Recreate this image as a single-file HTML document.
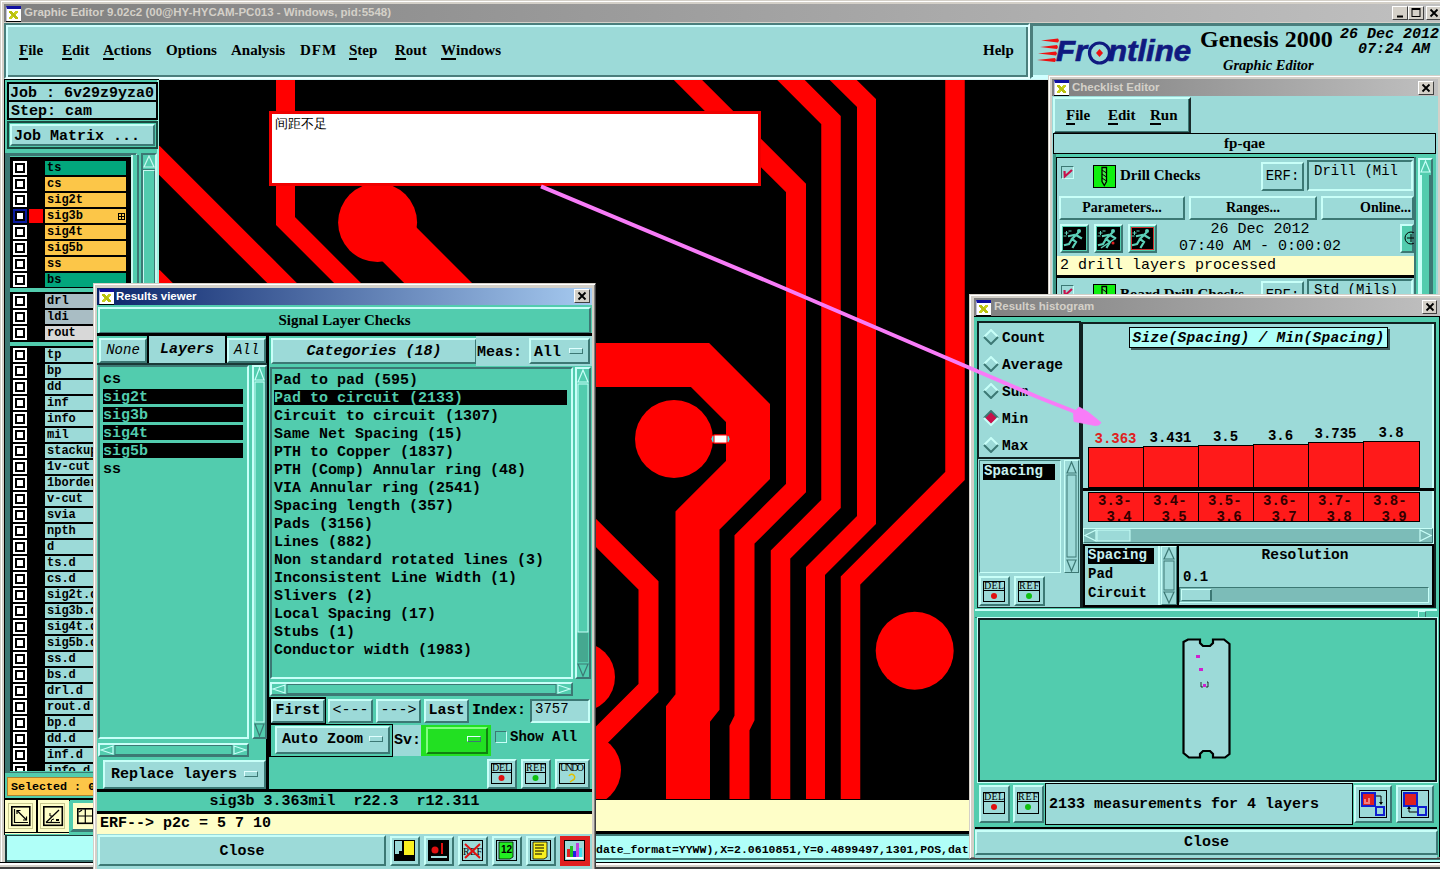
<!DOCTYPE html>
<html><head><meta charset="utf-8">
<style>
*{margin:0;padding:0;box-sizing:border-box}
html,body{width:1440px;height:869px;overflow:hidden;background:#d4d0c8;position:relative}
.a{position:absolute}
u{text-decoration:none;border-bottom:2px solid #000;padding-bottom:0;display:inline-block;line-height:15px}
.mono{font-family:"Liberation Mono",monospace;font-weight:bold}
.serif{font-family:"Liberation Serif",serif;font-weight:bold}
.sans{font-family:"Liberation Sans",sans-serif;font-weight:bold}
.tb{background:linear-gradient(to right,#808080,#c0c0c0);color:#d4d0c8;font-family:"Liberation Sans",sans-serif;font-weight:bold;font-size:11.5px;line-height:17px;white-space:nowrap;overflow:hidden}
.tba{background:linear-gradient(to right,#0a246a,#a6caf0);color:#fff}
.ico{position:absolute;width:15px;height:15px;background:#fff;border-top:3px solid #1010a0;border-left:1px solid #c0c0e0;box-shadow:0 1px 0 #000}.ico::after{content:"";position:absolute;left:2px;top:2px;width:9px;height:8px;background:linear-gradient(45deg,transparent 40%,#b8c010 40%,#b8c010 60%,transparent 60%),linear-gradient(-45deg,transparent 40%,#c8d020 40%,#c8d020 60%,transparent 60%)}
.xbtn{position:absolute;width:16px;height:14px;background:#d4d0c8;border:1px solid;border-color:#fff #404040 #404040 #fff;font-family:"Liberation Sans",sans-serif;font-size:12px;line-height:11px;text-align:center;color:#000}
.out{border:2px solid;border-color:#c8f8f0 #3c7874 #3c7874 #c8f8f0}
.in{border:2px solid;border-color:#3c7874 #c8f8f0 #c8f8f0 #3c7874}
.win{position:absolute;background:#d4d0c8;border:1px solid;border-color:#d4d0c8 #404040 #404040 #d4d0c8;box-shadow:inset 1px 1px 0 #fff,inset -1px -1px 0 #808080}
</style></head><body>
<!-- outer frame lines -->
<div class="a" style="left:1px;top:1px;width:1439px;height:868px;border-left:1px solid #fff;border-top:1px solid #fff"></div>
<!-- main title -->
<div class="a tb" style="left:4px;top:4px;width:1436px;height:18px;padding-left:20px">Graphic Editor 9.02c2 (00@HY-HYCAM-PC013 - Windows, pid:5548)</div>
<div class="ico" style="left:6px;top:6px"></div>
<div class="xbtn" style="left:1392px;top:6px"><svg width="14" height="12" style="position:absolute;left:0;top:0"><rect x="4" y="8.5" width="6" height="2" fill="#000"/></svg></div>
<div class="xbtn" style="left:1408px;top:6px"><svg width="14" height="12" style="position:absolute;left:0;top:0"><rect x="3" y="1.5" width="8" height="8" fill="none" stroke="#000" stroke-width="1"/><rect x="3" y="1.5" width="8" height="1.5" fill="#000"/></svg></div>
<div class="xbtn" style="left:1426px;top:6px"><svg width="14" height="12" style="position:absolute;left:0;top:0"><path d="M3.5,2.5 L10.5,9.5 M10.5,2.5 L3.5,9.5" stroke="#000" stroke-width="1.8"/></svg></div>

<!-- MENUBAR -->
<div class="a" style="left:4px;top:22px;width:1436px;height:1px;background:#d4d0c8"></div>
<div class="a" style="left:4px;top:23px;width:1436px;height:57px;background:#d0f4f4"></div>
<div class="a" style="left:4px;top:23px;width:1026px;height:56px;background:#9cdad8;border:2px solid;border-color:#4a7e7c #e8ffff #e8ffff #4a7e7c;box-shadow:inset 2px 2px 0 #d0ffff,inset -2px -2px 0 #4a7e7c"></div>
<div class="a serif" style="left:0;top:41px;font-size:15px;line-height:18px;color:#000;white-space:nowrap">
<span class="a" style="left:19px"><u>F</u>ile</span>
<span class="a" style="left:62px"><u>E</u>dit</span>
<span class="a" style="left:103px"><u>A</u>ctions</span>
<span class="a" style="left:166px">Options</span>
<span class="a" style="left:231px">Analysis</span>
<span class="a" style="left:300px;letter-spacing:1px">DFM</span>
<span class="a" style="left:349px"><u>S</u>tep</span>
<span class="a" style="left:395px"><u>R</u>out</span>
<span class="a" style="left:441px"><u>W</u>indows</span>
<span class="a" style="left:983px">Help</span>
</div>
<!-- Help separator -->
<div class="a" style="left:960px;top:25px;width:2px;height:50px;background:transparent"></div>
<!-- FRONTLINE PANEL -->
<div class="a" style="left:1030px;top:23px;width:420px;height:56px;background:#9cdad8;border:2px solid;border-color:#4a7e7c #d0ffff #d0ffff #4a7e7c;box-shadow:inset 1px 1px 0 #4a7e7c,inset -2px -2px 0 #d0ffff"></div>
<svg class="a" style="left:1030px;top:23px" width="410" height="55">
<g fill="#ee1111">
<polygon points="11,17.5 28,15.5 29,17.5 28,19.5"/>
<polygon points="10,24 27,22 28,24 27,26"/>
<polygon points="8,30.5 26,28.5 27,30.5 26,32.5"/>
<polygon points="7,37 25,35 26,37 25,39"/>
</g>
</svg>
<div class="a" style="left:1056px;top:34px;font-family:'Liberation Sans',sans-serif;font-weight:bold;font-style:italic;font-size:30px;line-height:34px;color:#101a80;letter-spacing:0px;-webkit-text-stroke:0.7px #101a80;white-space:nowrap;transform:scaleX(1.04);transform-origin:0 0">Fr<span style="display:inline-block;width:20px"></span>ntline</div>
<svg class="a" style="left:1087px;top:39px" width="26" height="28"><circle cx="12.5" cy="14" r="10" fill="none" stroke="#101a80" stroke-width="3.2"/><polygon points="12.5,10 16,14 12.5,18 9,14" fill="#ee1111"/></svg>
<div class="a serif" style="left:1200px;top:25px;font-size:24px;line-height:28px;color:#000;white-space:nowrap">Genesis 2000</div>
<div class="a serif" style="left:1223px;top:57px;font-size:14.5px;line-height:17px;font-style:italic;color:#000;white-space:nowrap">Graphic Editor</div>
<div class="a mono" style="left:1340px;top:27px;font-size:15px;line-height:15px;font-style:italic;color:#000;white-space:pre">26 Dec 2012
  07:24 AM</div>
<!-- LEFT PANEL -->
<style>
.cb{position:absolute;left:13px;width:14px;height:14px;background:#fff;border:2px solid #fff;box-shadow:inset 0 0 0 2px #000}
.lbl{position:absolute;left:45px;width:81px;height:14px;font-family:"Liberation Mono",monospace;font-weight:bold;font-size:12px;line-height:15px;padding-left:2px;color:#000;white-space:nowrap;overflow:hidden}
</style>
<div class="a" style="left:4px;top:79px;width:155px;height:756px;background:#52ccae;border-left:1px solid #000;border-top:1px solid #000;box-shadow:inset -2px 0 0 #a0f0e0"></div>
<div class="a mono" style="left:7px;top:82px;width:151px;height:20px;background:#9cdad8;border:2px solid #000;font-size:15px;line-height:19px;padding-left:1px;white-space:pre">Job : 6v29z9yza0</div>
<div class="a mono" style="left:7px;top:100px;width:151px;height:20px;background:#9cdad8;border:2px solid #000;font-size:15px;line-height:19px;padding-left:2px;white-space:pre">Step: cam</div>
<div class="a" style="left:7px;top:121px;width:151px;height:28px;background:#52ccae;border:2px solid #1a4a40"></div>
<div class="a mono" style="left:10px;top:124px;width:145px;height:22px;background:#9cdad8;border:2px solid;border-color:#c8fff8 #3c7874 #3c7874 #c8fff8;font-size:15px;line-height:21px;padding-left:2px;white-space:pre">Job Matrix ...</div>
<!-- layer list frame -->
<div class="a" style="left:5px;top:153px;width:132px;height:619px;border-top:3px solid #3c7874;border-left:5px solid #3c7874;border-right:2px solid #c8f8f0"></div>
<div class="a" style="left:10px;top:157px;width:121px;height:614px;background:#000;overflow:hidden">
<div class="a" style="left:-10px;top:-157px;width:200px;height:800px">
<div class="cb" style="top:161px;border-color:#fff"></div><div class="lbl" style="top:161px;background:#02a67c">ts</div>
<div class="cb" style="top:177px;border-color:#fff"></div><div class="lbl" style="top:177px;background:#fcc648">cs</div>
<div class="cb" style="top:193px;border-color:#fff"></div><div class="lbl" style="top:193px;background:#fcc648">sig2t</div>
<div class="cb" style="top:209px;border-color:#0a1aa0"></div><div class="a" style="left:29px;top:209px;width:14px;height:14px;background:#ff0000"></div><div class="lbl" style="top:209px;background:#fcc648">sig3b</div>
<div class="cb" style="top:225px;border-color:#fff"></div><div class="lbl" style="top:225px;background:#fcc648">sig4t</div>
<div class="cb" style="top:241px;border-color:#fff"></div><div class="lbl" style="top:241px;background:#fcc648">sig5b</div>
<div class="cb" style="top:257px;border-color:#fff"></div><div class="lbl" style="top:257px;background:#fcc648">ss</div>
<div class="cb" style="top:273px;border-color:#fff"></div><div class="lbl" style="top:273px;background:#02a67c">bs</div>
<div class="cb" style="top:294px;border-color:#fff"></div><div class="lbl" style="top:294px;background:#a9bdc4">drl</div>
<div class="cb" style="top:310px;border-color:#fff"></div><div class="lbl" style="top:310px;background:#a9bdc4">ldi</div>
<div class="cb" style="top:326px;border-color:#fff"></div><div class="lbl" style="top:326px;background:#d8d8d8">rout</div>
<div class="cb" style="top:348px;border-color:#fff"></div><div class="lbl" style="top:348px;background:#9cdad8">tp</div>
<div class="cb" style="top:364px;border-color:#fff"></div><div class="lbl" style="top:364px;background:#9cdad8">bp</div>
<div class="cb" style="top:380px;border-color:#fff"></div><div class="lbl" style="top:380px;background:#9cdad8">dd</div>
<div class="cb" style="top:396px;border-color:#fff"></div><div class="lbl" style="top:396px;background:#9cdad8">inf</div>
<div class="cb" style="top:412px;border-color:#fff"></div><div class="lbl" style="top:412px;background:#9cdad8">info</div>
<div class="cb" style="top:428px;border-color:#fff"></div><div class="lbl" style="top:428px;background:#9cdad8">mil</div>
<div class="cb" style="top:444px;border-color:#fff"></div><div class="lbl" style="top:444px;background:#9cdad8">stackup</div>
<div class="cb" style="top:460px;border-color:#fff"></div><div class="lbl" style="top:460px;background:#9cdad8">1v-cut</div>
<div class="cb" style="top:476px;border-color:#fff"></div><div class="lbl" style="top:476px;background:#9cdad8">1border</div>
<div class="cb" style="top:492px;border-color:#fff"></div><div class="lbl" style="top:492px;background:#9cdad8">v-cut</div>
<div class="cb" style="top:508px;border-color:#fff"></div><div class="lbl" style="top:508px;background:#9cdad8">svia</div>
<div class="cb" style="top:524px;border-color:#fff"></div><div class="lbl" style="top:524px;background:#9cdad8">npth</div>
<div class="cb" style="top:540px;border-color:#fff"></div><div class="lbl" style="top:540px;background:#9cdad8">d</div>
<div class="cb" style="top:556px;border-color:#fff"></div><div class="lbl" style="top:556px;background:#9cdad8">ts.d</div>
<div class="cb" style="top:572px;border-color:#fff"></div><div class="lbl" style="top:572px;background:#9cdad8">cs.d</div>
<div class="cb" style="top:588px;border-color:#fff"></div><div class="lbl" style="top:588px;background:#9cdad8">sig2t.d</div>
<div class="cb" style="top:604px;border-color:#fff"></div><div class="lbl" style="top:604px;background:#9cdad8">sig3b.d</div>
<div class="cb" style="top:620px;border-color:#fff"></div><div class="lbl" style="top:620px;background:#9cdad8">sig4t.d</div>
<div class="cb" style="top:636px;border-color:#fff"></div><div class="lbl" style="top:636px;background:#9cdad8">sig5b.d</div>
<div class="cb" style="top:652px;border-color:#fff"></div><div class="lbl" style="top:652px;background:#9cdad8">ss.d</div>
<div class="cb" style="top:668px;border-color:#fff"></div><div class="lbl" style="top:668px;background:#9cdad8">bs.d</div>
<div class="cb" style="top:684px;border-color:#fff"></div><div class="lbl" style="top:684px;background:#9cdad8">drl.d</div>
<div class="cb" style="top:700px;border-color:#fff"></div><div class="lbl" style="top:700px;background:#9cdad8">rout.d</div>
<div class="cb" style="top:716px;border-color:#fff"></div><div class="lbl" style="top:716px;background:#9cdad8">bp.d</div>
<div class="cb" style="top:732px;border-color:#fff"></div><div class="lbl" style="top:732px;background:#9cdad8">dd.d</div>
<div class="cb" style="top:748px;border-color:#fff"></div><div class="lbl" style="top:748px;background:#9cdad8">inf.d</div>
<div class="cb" style="top:764px;border-color:#fff"></div><div class="lbl" style="top:764px;background:#9cdad8">info.d</div>
<div class="a" style="left:10px;top:288px;width:121px;height:4px;background:#52ccae"></div>
<div class="a" style="left:10px;top:342px;width:121px;height:4px;background:#52ccae"></div>
</div></div>
<svg class="a" style="left:118px;top:213px" width="7" height="7"><rect x="0.5" y="0.5" width="6" height="6" fill="none" stroke="#000"/><line x1="3.5" y1="0" x2="3.5" y2="7" stroke="#000"/><line x1="0" y1="3.5" x2="7" y2="3.5" stroke="#000"/></svg>
<!-- scrollbar -->
<div class="a" style="left:131px;top:155px;width:8px;height:616px;background:#52ccae;border-left:2px solid #c8f8f0;border-right:2px solid #3c7874"></div>
<div class="a" style="left:141px;top:153px;width:16px;height:619px;background:#3c7874;border:2px solid;border-color:#3c7874 #c8f8f0 #c8f8f0 #3c7874"></div>
<div class="a" style="left:143px;top:155px;width:12px;height:14px;background:#52ccae"></div>
<svg class="a" style="left:143px;top:155px" width="12" height="14"><polygon points="6,1 11,12 1,12" fill="#52ccae" stroke="#c8f8f0" stroke-width="1.2"/></svg>
<div class="a" style="left:143px;top:170px;width:12px;height:600px;background:#52ccae;border:1px solid;border-color:#c8f8f0 #3c7874 #3c7874 #c8f8f0"></div>
<!-- selected -->
<div class="a" style="left:5px;top:772px;width:154px;height:28px;background:#52ccae;border-top:1px solid #3c7874"></div>
<div class="a mono" style="left:7px;top:777px;width:100px;height:19px;background:#fcc648;border:1px solid #b08030;font-size:11.7px;line-height:18px;padding-left:3px;white-space:pre">Selected : 0</div>
<div class="a" style="left:5px;top:798px;width:154px;height:3px;background:#000"></div>
<div class="a" style="left:5px;top:801px;width:154px;height:33px;background:#52ccae"></div>
<div class="a" style="left:5px;top:800px;width:64px;height:33px;background:#fefec8;border-bottom:1px solid #000;box-shadow:0 1px 0 #fefec8"></div>
<div class="a" style="left:36px;top:800px;width:2px;height:32px;background:#000"></div>
<div class="a" style="left:70px;top:800px;width:26px;height:32px;background:#fefec8;border:3px solid;border-color:#52ccae #3c7874 #3c7874 #52ccae"></div>
<svg class="a" style="left:5px;top:800px" width="91" height="33">
<g fill="none" stroke="#c8c890" stroke-width="1"><rect x="3.5" y="3.5" width="24" height="25"/><rect x="35.5" y="3.5" width="24" height="25"/></g>
<g fill="none" stroke="#000" stroke-width="1.6">
<rect x="6.8" y="6.8" width="18" height="18.5"/>
<polyline points="9.5,9 9.5,22.5 23,22.5" stroke-width="1.2"/>
<line x1="12" y1="10.5" x2="21.5" y2="20" stroke-width="1.2"/>
<polyline points="12,14 12,10.5 15.5,10.5" stroke-width="1.2"/><polyline points="18,20 21.5,20 21.5,16.5" stroke-width="1.2"/>
<rect x="38.8" y="6.8" width="18.5" height="18.5"/>
<line x1="41" y1="22.5" x2="54" y2="10" stroke-width="1.3"/><line x1="41" y1="22.5" x2="55" y2="22.5" stroke-width="1.2"/>
<path d="M45,13 v3 h2" stroke-width="1"/><path d="M46,22 a3,3 0 0 1 3,-3" stroke-width="1"/><path d="M51,19.5 h3 M51,20.5 h3" stroke-width="1"/>
<rect x="72.8" y="8.8" width="15" height="14.5"/>
<path d="M74,12 l3,-2 M80.3,9 v14 M73,16 h15" stroke-width="1.2"/>
</g>
</svg>
<div class="a" style="left:5px;top:835px;width:154px;height:27px;background:#b0fff8;border-left:2px solid #1a3a3a;border-top:1px solid #1a3a3a;box-shadow:inset 0 -2px 0 #3c7874"></div>
<!-- CANVAS -->
<svg class="a" style="left:0;top:0" width="1440" height="869" viewBox="0 0 1440 869">
<defs><clipPath id="cc"><rect x="159" y="80" width="899" height="719"/></clipPath></defs>
<g clip-path="url(#cc)" fill="none" stroke="#ff0000" stroke-linejoin="miter" stroke-miterlimit="10">
<rect x="159" y="80" width="899" height="719" fill="#000" stroke="none"/>
<polyline stroke-width="19" points="285.5,60 285.5,221 570,505.5"/>
<polyline stroke-width="21" points="140,141 570,571"/>
<polyline stroke-width="21" points="130,255 570,695"/>
<polyline stroke-width="48" points="377.6,222.5 572,417"/>
<circle cx="377.6" cy="222.5" r="39.5" fill="#ff0000" stroke="none"/>
<polyline stroke-width="20" points="667,59 796,188 796,488 744.5,539.5 744.5,718 739.5,728 739.5,810"/>
<polyline stroke-width="19.5" points="772,61 831,120 831,504 780.5,554.5 780.5,810"/>
<polyline stroke-width="19" points="823,60 866.5,103 866.5,520 815.5,571 815.5,810"/>
<polyline stroke-width="19.5" points="955,60 955,476 850.5,580.5 850.5,810"/>
<polyline stroke-width="44" points="560,365 700,365 748,413 748,470 697.5,520.5 697.5,702 688,714 688,810"/>
<polyline stroke-width="20" points="550,487 648.5,585.5 648.5,688 560,776.5"/>
<circle cx="674" cy="439" r="39" fill="#ff0000" stroke="none"/>
<circle cx="914.7" cy="650.7" r="39" fill="#ff0000" stroke="none"/>
<circle cx="580" cy="677" r="35" fill="#ff0000" stroke="none"/>
<circle cx="585" cy="770" r="36" fill="#ff0000" stroke="none"/>
<rect x="711" y="435" width="19" height="8" rx="3.5" fill="#40e8f0"/><rect x="714" y="435" width="13" height="8" fill="#fff"/>
</g>
<rect x="270.5" y="112.5" width="489" height="72" fill="#fff" stroke="#f00000" stroke-width="3"/>
</svg>
<div class="a" style="left:275px;top:116px;font-family:'Liberation Sans',sans-serif;font-size:13px;line-height:16px;color:#000">间距不足</div>


<!-- BOTTOM BARS -->
<div class="a" style="left:158px;top:799px;width:900px;height:33px;background:#fefec8;border-top:1px solid #000"></div>
<div class="a" style="left:158px;top:831px;width:900px;height:3px;background:#000"></div>
<div class="a" style="left:158px;top:834px;width:900px;height:28px;background:#b0fff8;border-top:2px solid #3c7874;border-bottom:2px solid #b0fff8;box-shadow:inset 0 -2px 0 #3c7874"></div>
<div class="a mono" style="left:596px;top:842px;font-size:11.5px;line-height:16px;white-space:pre">date_format=YYWW),X=2.0610851,Y=0.4899497,1301,POS,dat</div>
<div class="a" style="left:0;top:862px;width:1440px;height:7px;background:#d4d0c8;border-top:1px solid #000;box-shadow:inset 0 2px 0 #fff,inset 0 -2px 0 #404040"></div>
<div class="a" style="left:1058px;top:834px;width:382px;height:28px;background:#b0fff8;border-top:2px solid #3c7874;border-bottom:2px solid #b0fff8;box-shadow:inset 0 -2px 0 #3c7874"></div>
<!-- RESULTS VIEWER -->
<style>
.rvt{font-family:"Liberation Mono",monospace;font-weight:bold;font-size:15px;line-height:18px;white-space:pre}
.sb{position:absolute;background:#52ccae;border:2px solid;border-color:#3c7874 #c8fff8 #c8fff8 #3c7874}
.dd{position:absolute;width:14px;height:6px;background:#9cdad8;border:1px solid;border-color:#e0ffff #3c7874 #3c7874 #e0ffff}
.ib{position:absolute;width:30px;height:30px;background:#9cdad8;border:2px solid;border-color:#c8fff8 #3c7874 #3c7874 #c8fff8}
</style>
<div class="win" style="left:93px;top:283px;width:503px;height:592px"></div>
<div class="a tb tba" style="left:97px;top:288px;width:495px;height:17px;padding-left:19px">Results viewer</div>
<div class="ico" style="left:99px;top:289px"></div>
<div class="xbtn" style="left:574px;top:289px;width:16px;height:14px"><svg width="14" height="12" style="position:absolute;left:0;top:0"><path d="M3.5,2.5 L10.5,9.5 M10.5,2.5 L3.5,9.5" stroke="#000" stroke-width="1.8"/></svg></div>
<div class="a" style="left:97px;top:305px;width:495px;height:566px;background:#52ccae"></div>
<div class="btg serif" style="left:98px;top:307px;width:493px;height:27px;font-size:15px;line-height:23px">Signal Layer Checks</div>
<div class="a" style="left:97px;top:333px;width:495px;height:3px;background:#000"></div>
<div class="a" style="left:266px;top:336px;width:3px;height:456px;background:#000"></div>
<div class="a" style="left:97px;top:789px;width:495px;height:3px;background:#000"></div>
<!-- left column -->
<div class="bt rvt" style="left:99px;top:338px;width:48px;height:25px;font-style:italic;font-weight:normal;font-size:14px;line-height:21px">None</div>
<div class="a rvt" style="left:149px;top:336px;width:76px;height:27px;background:#9cdad8;font-style:italic;line-height:28px;text-align:center">Layers</div>
<div class="bt rvt" style="left:227px;top:338px;width:39px;height:25px;font-style:italic;font-weight:normal;font-size:14px;line-height:21px">All</div>
<div class="a" style="left:147px;top:336px;width:2px;height:28px;background:#000"></div>
<div class="a" style="left:225px;top:336px;width:2px;height:28px;background:#000"></div>
<div class="a" style="left:97px;top:363px;width:170px;height:2px;background:#1a3a38"></div>
<div class="sb" style="left:98px;top:365px;width:151px;height:374px"></div>
<div class="rvt"><div class="a" style="left:103px;top:371px;color:#000">cs</div>
<div class="a" style="left:103px;top:389px;width:140px;height:15px;background:#000"></div>
<div class="a" style="left:103px;top:389px;color:#52ccae">sig2t</div>
<div class="a" style="left:103px;top:407px;width:140px;height:15px;background:#000"></div>
<div class="a" style="left:103px;top:407px;color:#52ccae">sig3b</div>
<div class="a" style="left:103px;top:425px;width:140px;height:15px;background:#000"></div>
<div class="a" style="left:103px;top:425px;color:#52ccae">sig4t</div>
<div class="a" style="left:103px;top:443px;width:140px;height:15px;background:#000"></div>
<div class="a" style="left:103px;top:443px;color:#52ccae">sig5b</div>
<div class="a" style="left:103px;top:461px;color:#000">ss</div></div>
<div class="sb" style="left:252px;top:365px;width:15px;height:374px;border-color:#c8fff8 #3c7874 #3c7874 #c8fff8"></div>
<svg class="a" style="left:254px;top:367px" width="11" height="370"><polygon points="5.5,1 10,13 1,13" fill="none" stroke="#c8fff8" stroke-width="1.2"/><polygon points="5.5,369 10,357 1,357" fill="none" stroke="#3c7874" stroke-width="1.2"/><rect x="1" y="15" width="9" height="340" fill="none" stroke="#c8fff8"/></svg>
<div class="sb" style="left:98px;top:743px;width:151px;height:14px;border-color:#c8fff8 #3c7874 #3c7874 #c8fff8"></div>
<svg class="a" style="left:100px;top:745px" width="147" height="10"><polygon points="1,5 13,1 13,9" fill="none" stroke="#c8fff8" stroke-width="1.2"/><polygon points="146,5 134,1 134,9" fill="none" stroke="#c8fff8" stroke-width="1.2"/><rect x="15" y="0.5" width="117" height="9" fill="none" stroke="#3c7874"/></svg>
<div class="bt rvt" style="left:103px;top:760px;width:163px;height:29px;font-weight:bold;font-size:15px;line-height:25px;text-align:left;padding-left:6px">Replace layers</div>
<div class="dd" style="left:244px;top:771px"></div>
<!-- right column -->
<div class="bt rvt" style="left:271px;top:338px;width:206px;height:26px;font-style:italic;line-height:24px">Categories (18)</div>
<div class="a" style="left:476px;top:336px;width:116px;height:30px;background:#9cdad8"></div>
<div class="a rvt" style="left:477px;top:344px">Meas:</div>
<div class="bt rvt" style="left:529px;top:338px;width:61px;height:26px;line-height:25px;text-align:left;padding-left:3px">All</div>
<div class="dd" style="left:569px;top:348px"></div>
<div class="sb" style="left:270px;top:367px;width:303px;height:312px"></div>
<div class="rvt"><div class="a" style="left:274px;top:372px;color:#000">Pad to pad (595)</div>
<div class="a" style="left:274px;top:390px;width:293px;height:15px;background:#000"></div>
<div class="a" style="left:274px;top:390px;color:#52ccae">Pad to circuit (2133)</div>
<div class="a" style="left:274px;top:408px;color:#000">Circuit to circuit (1307)</div>
<div class="a" style="left:274px;top:426px;color:#000">Same Net Spacing (15)</div>
<div class="a" style="left:274px;top:444px;color:#000">PTH to Copper (1837)</div>
<div class="a" style="left:274px;top:462px;color:#000">PTH (Comp) Annular ring (48)</div>
<div class="a" style="left:274px;top:480px;color:#000">VIA Annular ring (2541)</div>
<div class="a" style="left:274px;top:498px;color:#000">Spacing length (357)</div>
<div class="a" style="left:274px;top:516px;color:#000">Pads (3156)</div>
<div class="a" style="left:274px;top:534px;color:#000">Lines (882)</div>
<div class="a" style="left:274px;top:552px;color:#000">Non standard rotated lines (3)</div>
<div class="a" style="left:274px;top:570px;color:#000">Inconsistent Line Width (1)</div>
<div class="a" style="left:274px;top:588px;color:#000">Slivers (2)</div>
<div class="a" style="left:274px;top:606px;color:#000">Local Spacing (17)</div>
<div class="a" style="left:274px;top:624px;color:#000">Stubs (1)</div>
<div class="a" style="left:274px;top:642px;color:#000">Conductor width (1983)</div></div>
<div class="sb" style="left:575px;top:367px;width:16px;height:312px;border-color:#c8fff8 #3c7874 #3c7874 #c8fff8"></div>
<svg class="a" style="left:577px;top:369px" width="12" height="308"><polygon points="6,1 11,13 1,13" fill="none" stroke="#c8fff8" stroke-width="1.2"/><polygon points="6,307 11,295 1,295" fill="none" stroke="#3c7874" stroke-width="1.2"/><rect x="1" y="263" width="10" height="30" fill="#45a890" stroke="none"/><rect x="1" y="15" width="10" height="248" fill="none" stroke="#c8fff8"/></svg>
<div class="sb" style="left:270px;top:682px;width:303px;height:14px;border-color:#c8fff8 #3c7874 #3c7874 #c8fff8"></div>
<svg class="a" style="left:272px;top:684px" width="299" height="10"><polygon points="1,5 13,1 13,9" fill="none" stroke="#c8fff8" stroke-width="1.2"/><polygon points="298,5 286,1 286,9" fill="none" stroke="#c8fff8" stroke-width="1.2"/><rect x="15" y="0.5" width="269" height="9" fill="none" stroke="#3c7874"/></svg>
<div class="a" style="left:269px;top:697px;width:57px;height:27px;background:#000"></div>
<div class="bt rvt" style="left:271px;top:699px;width:54px;height:24px;line-height:20px">First</div>
<div class="bt rvt" style="left:328px;top:699px;width:45px;height:24px;line-height:20px;font-weight:normal">&lt;---</div>
<div class="bt rvt" style="left:376px;top:699px;width:45px;height:24px;line-height:20px;font-weight:normal">---&gt;</div>
<div class="bt rvt" style="left:424px;top:699px;width:45px;height:24px;line-height:20px">Last</div>
<div class="a rvt" style="left:472px;top:702px">Index:</div>
<div class="fld rvt" style="left:530px;top:699px;width:60px;height:24px;line-height:17px;font-weight:normal;font-size:14px;padding-left:3px">3757</div>
<div class="a" style="left:269px;top:724px;width:124px;height:33px;background:#000"></div>
<div class="a" style="left:271px;top:725px;width:121px;height:31px;background:#52ccae"></div>
<div class="bt rvt" style="left:275px;top:726px;width:115px;height:28px;line-height:24px;text-align:left;padding-left:5px">Auto Zoom</div>
<div class="dd" style="left:369px;top:736px"></div>
<div class="a rvt" style="left:393px;top:725px;width:29px;height:31px;background:#9cdad8;line-height:31px;padding-left:1px">Sv:</div>
<div class="a" style="left:421px;top:725px;width:70px;height:31px;background:#22e022"></div>
<div class="bt" style="left:426px;top:727px;width:62px;height:27px;background:#22e022;border-color:#80ff80 #108010 #108010 #80ff80"></div>
<div class="dd" style="left:467px;top:736px;background:#22e022"></div>
<div class="a" style="left:495px;top:731px;width:12px;height:12px;border:1px solid;border-color:#3c7874 #c8fff8 #c8fff8 #3c7874"></div>
<div class="a rvt" style="left:510px;top:728px;font-size:14px">Show All</div>
<div class="ib" style="left:487px;top:759px"></div>
<div class="ib" style="left:521px;top:759px"></div>
<div class="ib" style="left:555px;top:759px;width:35px"></div>
<svg class="a" style="left:487px;top:759px" width="105" height="30">
<g font-family="Liberation Serif,serif" font-size="10" fill="#000">
<rect x="4.5" y="4.5" width="20" height="20" fill="none" stroke="#000"/><line x1="4" y1="13.5" x2="25" y2="13.5" stroke="#000"/><text x="5" y="12" textLength="19">DEL</text><circle cx="14.5" cy="19" r="3" fill="#e01010"/>
<rect x="38.5" y="4.5" width="20" height="20" fill="none" stroke="#000"/><line x1="38" y1="13.5" x2="59" y2="13.5" stroke="#000"/><text x="39" y="12" textLength="19">REF</text><circle cx="48.5" cy="19" r="3" fill="#10c010"/>
<rect x="72.5" y="4.5" width="25" height="20" fill="none" stroke="#000"/><text x="73" y="12" textLength="24">UNDO</text><path d="M82,17 a3,3 0 1 1 4,4 l-3,2" fill="none" stroke="#e0c000" stroke-width="1.5"/>
</g></svg>
<!-- status -->
<div class="a rvt" style="left:97px;top:792px;width:495px;height:20px;line-height:20px;text-align:center;font-size:15px">sig3b 3.363mil  r22.3  r12.311</div>
<div class="a" style="left:97px;top:811px;width:495px;height:3px;background:#000"></div>
<div class="a rvt" style="left:97px;top:814px;width:495px;height:20px;background:#fefec8;line-height:19px;padding-left:3px">ERF--&gt; p2c = 5 7 10</div>
<div class="a" style="left:97px;top:834px;width:495px;height:36px;background:#9cdad8"></div>
<div class="bt rvt" style="left:98px;top:835px;width:288px;height:31px;line-height:29px">Close</div>
<div class="ib" style="left:390px;top:836px"></div>
<div class="ib" style="left:424px;top:836px"></div>
<div class="ib" style="left:458px;top:836px"></div>
<div class="ib" style="left:492px;top:836px"></div>
<div class="ib" style="left:526px;top:836px"></div>
<div class="ib" style="left:560px;top:836px;background:#e02020;border-color:#e02020"></div>
<svg class="a" style="left:390px;top:836px" width="200" height="30">
<rect x="4.5" y="4.5" width="20" height="20" fill="#9cdad8" stroke="#000"/>
<path d="M5,5 h6 v8 h-2 v3 h-4z" fill="#9cdad8"/><path d="M5,24 v-6 h4 v-3 h3 v-10 h2 v19z" fill="#000"/><rect x="14" y="5" width="10" height="14" fill="#f8f020"/><rect x="5" y="19" width="20" height="6" fill="#000"/>
<rect x="38.5" y="4.5" width="20" height="20" fill="#000" stroke="#000"/><circle cx="45" cy="14" r="3.5" fill="#e01010"/><rect x="51" y="7" width="2" height="11" fill="#e01010"/><rect x="41" y="20" width="16" height="2" fill="#9cdad8"/>
<rect x="72.5" y="4.5" width="20" height="20" fill="#9cdad8" stroke="#000"/><text x="73" y="19" font-family="Liberation Serif,serif" font-size="10" textLength="19">REF</text><path d="M75,8 L90,22 M90,8 L75,22" stroke="#e01010" stroke-width="2"/>
<rect x="106.5" y="4.5" width="20" height="20" fill="#9cdad8" stroke="#000"/><path d="M109,6 h14 v15 l-3,2 h-11z" fill="#22ee22" stroke="#000" stroke-width="0.8"/><text x="111" y="17" font-family="Liberation Sans,sans-serif" font-weight="bold" font-size="10">12</text>
<rect x="140.5" y="4.5" width="20" height="20" fill="#9cdad8" stroke="#000"/><path d="M143,6 h14 v15 l-3,2 h-11z" fill="#f8f020" stroke="#000" stroke-width="0.8"/><path d="M145,9h9M145,12h9M145,15h9M145,18h7" stroke="#000"/>
<rect x="174.5" y="4.5" width="20" height="20" fill="#9cdad8" stroke="#000"/><rect x="177" y="13" width="3" height="8" fill="#e02020"/><rect x="180" y="10" width="3" height="11" fill="#20c020"/><rect x="183" y="15" width="3" height="6" fill="#2020e0"/><rect x="186" y="7" width="3" height="14" fill="#c040e0"/><rect x="189" y="12" width="3" height="9" fill="#40e0f0"/><rect x="176" y="21" width="17" height="2" fill="#fff"/>
</svg>
<!-- CHECKLIST EDITOR -->
<style>
.bt{position:absolute;background:#9cdad8;border:2px solid;border-color:#c8fff8 #3c7874 #3c7874 #c8fff8;text-align:center;white-space:nowrap;color:#000}
.btg{position:absolute;background:#52ccae;border:2px solid;border-color:#c8fff8 #3c7874 #3c7874 #c8fff8;text-align:center;white-space:nowrap;color:#000}
.fld{position:absolute;background:#9cdad8;border:2px solid;border-color:#3c7874 #c8fff8 #c8fff8 #3c7874;white-space:nowrap;color:#000}
.nm{font-family:"Liberation Mono",monospace;font-weight:normal}
.runner{position:absolute;width:29px;height:29px;background:#52ccae;border:2px solid;border-color:#c8fff8 #3c7874 #3c7874 #c8fff8}
.runner i{position:absolute;left:1px;top:1px;width:23px;height:23px;background:#000}
</style>
<div class="win" style="left:1048px;top:75px;width:395px;height:225px"></div>
<div class="a tb" style="left:1052px;top:79px;width:386px;height:17px;padding-left:20px">Checklist Editor</div>
<div class="ico" style="left:1054px;top:80px"></div>
<div class="xbtn" style="left:1418px;top:81px;width:16px;height:14px"><svg width="14" height="12" style="position:absolute;left:0;top:0"><path d="M3.5,2.5 L10.5,9.5 M10.5,2.5 L3.5,9.5" stroke="#000" stroke-width="1.8"/></svg></div>
<div class="a" style="left:1052px;top:96px;width:386px;height:200px;background:#9cdad8"></div>
<div class="a" style="left:1053px;top:97px;width:138px;height:37px;background:#9cdad8;border:2px solid;border-color:#c8fff8 #1a2a2a #1a2a2a #c8fff8;box-shadow:inset -1px -1px 0 #3c7874"></div>
<div class="a serif" style="left:0;top:106px;font-size:15px;line-height:18px;white-space:nowrap">
<span class="a" style="left:1066px"><u>F</u>ile</span><span class="a" style="left:1108px"><u>E</u>dit</span><span class="a" style="left:1150px"><u>R</u>un</span></div>
<div class="a serif" style="left:1053px;top:133px;width:383px;height:21px;background:#9cdad8;border:1px solid #000;font-size:15px;line-height:19px;text-align:center">fp-qae</div>
<div class="a" style="left:1053px;top:154px;width:383px;height:142px;background:#52ccae;border-left:3px solid #3c9484"></div>
<div class="a" style="left:1056px;top:157px;width:358px;height:139px;background:#9cdad8;border-left:1px solid #000;border-top:1px solid #000"></div>
<!-- row1 -->
<div class="a" style="left:1061px;top:166px;width:13px;height:13px;background:#9cdad8;border:1px solid;border-color:#3c7874 #c8fff8 #c8fff8 #3c7874"></div>
<svg class="a" style="left:1062px;top:167px" width="12" height="12"><polyline points="2.5,4 2.8,9.5 10,3" fill="none" stroke="#c8104a" stroke-width="2.2"/></svg>
<div class="a" style="left:1093px;top:165px;width:23px;height:23px;background:#10f010;border:1px solid #000"></div>
<svg class="a" style="left:1093px;top:165px" width="23" height="23"><path d="M9,2.5 h4.5 v14 l-2.2,4 l-2.3,-4 z" fill="#40f040" stroke="#000" stroke-width="1.3"/><path d="M9,5 l4.5,3 M9,9 l4.5,3 M9,13 l4.5,3" stroke="#000" stroke-width="1"/></svg>
<div class="a serif" style="left:1120px;top:166px;font-size:15px;line-height:18px;white-space:nowrap">Drill Checks</div>
<div class="bt nm" style="left:1261px;top:162px;width:43px;height:29px;font-size:14px;line-height:25px">ERF:</div>
<div class="fld nm" style="left:1307px;top:160px;width:106px;height:31px;font-size:14px;line-height:18px;padding-left:5px;text-align:left">Drill (Mil</div>
<div class="bt serif" style="left:1059px;top:196px;width:126px;height:24px;font-size:14px;line-height:20px">Parameters...</div>
<div class="bt serif" style="left:1189px;top:196px;width:128px;height:24px;font-size:14px;line-height:20px">Ranges...</div>
<div class="bt serif" style="left:1321px;top:196px;width:93px;height:24px;font-size:14px;line-height:20px;text-align:right;padding-right:1px">Online...</div>
<div class="runner" style="left:1060px;top:224px"><i></i></div>
<div class="runner" style="left:1094px;top:224px"><i></i></div>
<div class="runner" style="left:1128px;top:224px"><i style="box-shadow:inset 0 0 0 1px #d03030"></i></div>
<svg class="a" style="left:1060px;top:224px" width="100" height="29">
<g fill="none" stroke="#5cd0b8" stroke-width="2.2" stroke-linecap="square">
<g id="rn"><circle cx="19" cy="7" r="2" fill="#5cd0b8" stroke="none"/><path d="M18,9 L12,15 L16,18 L13,23 M12,15 L9,20 L5,21 M16,11 L21,14 M14,11 L9,12"/><path d="M5,9 h3 M6.5,7.5 v3 M9,7 h2 M4,12 h2" stroke-width="1"/></g>
<use href="#rn" x="34"/><use href="#rn" x="68"/>
</g>
<path d="M41,24 L56,14" stroke="#5cd0b8" stroke-width="1.5"/><circle cx="53" cy="19" r="1.5" fill="#e02020"/>
</svg>
<div class="a nm" style="left:1175px;top:221px;width:170px;font-size:15px;line-height:17px;text-align:center;white-space:pre">26 Dec 2012
07:40 AM - 0:00:02</div>
<div class="a" style="left:1400px;top:224px;width:14px;height:29px;background:#52ccae;border:2px solid;border-color:#c8fff8 #3c7874 #3c7874 #c8fff8"></div>
<svg class="a" style="left:1402px;top:230px" width="12" height="16"><circle cx="9" cy="8" r="6" fill="none" stroke="#000"/><path d="M5,8h8M9,4v8" stroke="#000"/></svg>
<div class="a nm" style="left:1057px;top:256px;width:357px;height:19px;background:#fefec8;font-size:15px;line-height:19px;padding-left:3px;white-space:pre">2 drill layers processed</div>
<div class="a" style="left:1057px;top:275px;width:357px;height:3px;background:#000"></div>
<!-- row2 -->
<div class="a" style="left:1061px;top:285px;width:13px;height:13px;background:#9cdad8;border:1px solid;border-color:#3c7874 #c8fff8 #c8fff8 #3c7874"></div>
<svg class="a" style="left:1062px;top:286px" width="12" height="12"><polyline points="2.5,4 2.8,9.5 10,3" fill="none" stroke="#c8104a" stroke-width="2.2"/></svg>
<div class="a" style="left:1093px;top:284px;width:23px;height:23px;background:#10f010;border:1px solid #000"></div>
<svg class="a" style="left:1093px;top:284px" width="23" height="12"><path d="M9,2.5 h4.5 v10 h-4.5z" fill="#40f040" stroke="#000" stroke-width="1.3"/><path d="M9,5 l4.5,3" stroke="#000"/></svg>
<div class="a serif" style="left:1120px;top:285px;font-size:15px;line-height:18px;white-space:nowrap">Board Drill Checks</div>
<div class="bt nm" style="left:1261px;top:281px;width:43px;height:29px;font-size:14px;line-height:25px">ERF:</div>
<div class="fld nm" style="left:1307px;top:279px;width:106px;height:31px;font-size:14px;line-height:18px;padding-left:5px;text-align:left">Std (Mils)</div>
<!-- scrollbar -->
<div class="a" style="left:1414px;top:157px;width:22px;height:139px;background:#52ccae;border-left:2px solid #3c7874"></div>
<div class="a" style="left:1418px;top:158px;width:15px;height:140px;background:#52ccae;border:2px solid;border-color:#c8fff8 #3c7874 #3c7874 #c8fff8"></div>
<svg class="a" style="left:1420px;top:160px" width="11" height="14"><polygon points="5.5,1 10,12 1,12" fill="#52ccae" stroke="#c8fff8" stroke-width="1.2"/></svg>
<div class="a" style="left:1420px;top:175px;width:11px;height:125px;border-left:2px solid #c8fff8;border-right:2px solid #3c7874"></div>
<!-- HISTOGRAM -->
<style>.hm{font-family:"Liberation Mono",monospace;font-weight:bold;font-size:14px;line-height:18px;white-space:pre;color:#000}</style>
<div class="win" style="left:969px;top:294px;width:480px;height:565px"></div>
<div class="a tb" style="left:974px;top:298px;width:470px;height:18px;padding-left:20px">Results histogram</div>
<div class="ico" style="left:976px;top:300px"></div>
<div class="xbtn" style="left:1422px;top:300px;width:15px;height:14px"><svg width="14" height="12" style="position:absolute;left:0;top:0"><path d="M3.5,2.5 L10.5,9.5 M10.5,2.5 L3.5,9.5" stroke="#000" stroke-width="1.8"/></svg></div>
<div class="a" style="left:974px;top:316px;width:466px;height:541px;background:#52ccae;border-top:1px solid #000;border-right:1px solid #000"></div>
<!-- radio panel -->
<div class="a" style="left:977px;top:321px;width:104px;height:138px;background:#9cdad8;border:2px solid #102020"></div>
<svg class="a" style="left:983px;top:329px" width="16" height="16"><polygon points="8,1 15,8 8,15 1,8" fill="#9cdad8"/><polyline points="1,8 8,1 15,8" fill="none" stroke="#c8fff8" stroke-width="2"/><polyline points="1,8 8,15 15,8" fill="none" stroke="#3c7874" stroke-width="2"/></svg>
<div class="a hm" style="left:1002px;top:329px;font-size:14.5px">Count</div>
<svg class="a" style="left:983px;top:356px" width="16" height="16"><polygon points="8,1 15,8 8,15 1,8" fill="#9cdad8"/><polyline points="1,8 8,1 15,8" fill="none" stroke="#c8fff8" stroke-width="2"/><polyline points="1,8 8,15 15,8" fill="none" stroke="#3c7874" stroke-width="2"/></svg>
<div class="a hm" style="left:1002px;top:356px;font-size:14.5px">Average</div>
<svg class="a" style="left:983px;top:383px" width="16" height="16"><polygon points="8,1 15,8 8,15 1,8" fill="#9cdad8"/><polyline points="1,8 8,1 15,8" fill="none" stroke="#c8fff8" stroke-width="2"/><polyline points="1,8 8,15 15,8" fill="none" stroke="#3c7874" stroke-width="2"/></svg>
<div class="a hm" style="left:1002px;top:383px;font-size:14.5px">Sum</div>
<svg class="a" style="left:983px;top:410px" width="16" height="16"><polygon points="8,1 15,8 8,15 1,8" fill="#c8104a"/><polyline points="1,8 8,1 15,8" fill="none" stroke="#3c7874" stroke-width="2"/><polyline points="1,8 8,15 15,8" fill="none" stroke="#c8fff8" stroke-width="2"/></svg>
<div class="a hm" style="left:1002px;top:410px;font-size:14.5px">Min</div>
<svg class="a" style="left:983px;top:437px" width="16" height="16"><polygon points="8,1 15,8 8,15 1,8" fill="#9cdad8"/><polyline points="1,8 8,1 15,8" fill="none" stroke="#c8fff8" stroke-width="2"/><polyline points="1,8 8,15 15,8" fill="none" stroke="#3c7874" stroke-width="2"/></svg>
<div class="a hm" style="left:1002px;top:437px;font-size:14.5px">Max</div>
<div class="a" style="left:977px;top:458px;width:104px;height:150px;background:#9cdad8;border:1px solid #102020"></div>
<div class="a" style="left:979px;top:460px;width:82px;height:113px;border:1px solid;border-color:#3c7874 #c8fff8 #c8fff8 #3c7874"></div>
<div class="a hm" style="left:983px;top:464px;width:72px;height:16px;background:#000;color:#c8f0f0;line-height:15px;padding-left:1px">Spacing</div>
<div class="a" style="left:1064px;top:460px;width:15px;height:113px;background:#9cdad8;border:1px solid;border-color:#c8fff8 #3c7874 #3c7874 #c8fff8"></div>
<svg class="a" style="left:1065px;top:461px" width="13" height="111"><polygon points="6.5,1 11,12 2,12" fill="none" stroke="#3c7874" stroke-width="1.2"/><polygon points="6.5,110 11,99 2,99" fill="none" stroke="#3c7874" stroke-width="1.2"/><rect x="2" y="14" width="9" height="82" fill="none" stroke="#3c7874"/></svg>
<div class="ib" style="left:979px;top:576px;width:31px;height:30px;background:#9cdad8"></div>
<div class="ib" style="left:1014px;top:576px;width:31px;height:30px;background:#9cdad8"></div>
<svg class="a" style="left:979px;top:576px" width="70" height="30">
<g font-family="Liberation Serif,serif" font-size="10" fill="#000">
<rect x="4.5" y="5.5" width="21" height="20" fill="none" stroke="#000"/><line x1="4" y1="14.5" x2="26" y2="14.5" stroke="#000"/><text x="5" y="13" textLength="20">DEL</text><circle cx="15" cy="20" r="3" fill="#e01010"/>
<rect x="39.5" y="5.5" width="21" height="20" fill="none" stroke="#000"/><line x1="39" y1="14.5" x2="61" y2="14.5" stroke="#000"/><text x="40" y="13" textLength="20">REF</text><circle cx="50" cy="20" r="3" fill="#10c010"/>
</g></svg>
<!-- chart panel -->
<div class="a" style="left:1081px;top:322px;width:355px;height:286px;background:#9cdad8;border:2px solid #102020;box-shadow:inset -2px 0 0 #c8fff8"></div>
<div class="a hm" style="left:1129px;top:327px;width:259px;height:21px;background:#b0fff8;border:1px solid #000;box-shadow:2px 2px 0 #3c5858;font-style:italic;font-size:14.5px;line-height:20px;text-align:center;letter-spacing:0.3px">Size(Spacing) / Min(Spacing)</div>
<div class="a" style="left:1088px;top:447px;width:56px;height:41px;background:#ff1a1a;border:1px solid #000"></div>
<div class="a hm" style="left:1088px;top:430px;width:55px;text-align:center;color:#e02020">3.363</div>
<div class="a hm" style="left:1088px;top:492px;width:56px;height:30px;background:#ff1a1a;border:1px solid #000;overflow:hidden;color:#300;padding-left:9px;line-height:16px;padding-top:0px;white-space:pre">3.3-
 3.4</div>
<div class="a" style="left:1143px;top:446px;width:56px;height:42px;background:#ff1a1a;border:1px solid #000"></div>
<div class="a hm" style="left:1143px;top:429px;width:55px;text-align:center;color:#000">3.431</div>
<div class="a hm" style="left:1143px;top:492px;width:56px;height:30px;background:#ff1a1a;border:1px solid #000;overflow:hidden;color:#300;padding-left:9px;line-height:16px;padding-top:0px;white-space:pre">3.4-
 3.5</div>
<div class="a" style="left:1198px;top:445px;width:56px;height:43px;background:#ff1a1a;border:1px solid #000"></div>
<div class="a hm" style="left:1198px;top:428px;width:55px;text-align:center;color:#000">3.5</div>
<div class="a hm" style="left:1198px;top:492px;width:56px;height:30px;background:#ff1a1a;border:1px solid #000;overflow:hidden;color:#300;padding-left:9px;line-height:16px;padding-top:0px;white-space:pre">3.5-
 3.6</div>
<div class="a" style="left:1253px;top:444px;width:56px;height:44px;background:#ff1a1a;border:1px solid #000"></div>
<div class="a hm" style="left:1253px;top:427px;width:55px;text-align:center;color:#000">3.6</div>
<div class="a hm" style="left:1253px;top:492px;width:56px;height:30px;background:#ff1a1a;border:1px solid #000;overflow:hidden;color:#300;padding-left:9px;line-height:16px;padding-top:0px;white-space:pre">3.6-
 3.7</div>
<div class="a" style="left:1308px;top:442px;width:56px;height:46px;background:#ff1a1a;border:1px solid #000"></div>
<div class="a hm" style="left:1308px;top:425px;width:55px;text-align:center;color:#000">3.735</div>
<div class="a hm" style="left:1308px;top:492px;width:56px;height:30px;background:#ff1a1a;border:1px solid #000;overflow:hidden;color:#300;padding-left:9px;line-height:16px;padding-top:0px;white-space:pre">3.7-
 3.8</div>
<div class="a" style="left:1363px;top:441px;width:57px;height:47px;background:#ff1a1a;border:1px solid #000"></div>
<div class="a hm" style="left:1363px;top:424px;width:56px;text-align:center;color:#000">3.8</div>
<div class="a hm" style="left:1363px;top:492px;width:57px;height:30px;background:#ff1a1a;border:1px solid #000;overflow:hidden;color:#300;padding-left:9px;line-height:16px;padding-top:0px;white-space:pre">3.8-
 3.9</div>
<div class="a" style="left:1083px;top:488px;width:351px;height:3px;background:#000"></div>
<div class="a" style="left:1083px;top:528px;width:350px;height:15px;background:#7cbcb8;border:1px solid;border-color:#c8fff8 #3c7874 #3c7874 #c8fff8"></div>
<svg class="a" style="left:1084px;top:529px" width="348" height="13"><polygon points="1,6.5 12,1 12,12" fill="none" stroke="#c8fff8" stroke-width="1.2"/><polygon points="347,6.5 336,1 336,12" fill="none" stroke="#c8fff8" stroke-width="1.2"/><rect x="13" y="1" width="33" height="11" fill="#9cdad8" stroke="#c8fff8"/></svg>
<div class="a" style="left:1083px;top:544px;width:351px;height:63px;background:#9cdad8;border:2px solid #000"></div>
<div class="a" style="left:1085px;top:546px;width:75px;height:59px;border-right:2px solid #c8fff8"></div>
<div class="a hm" style="left:1088px;top:548px;width:66px;height:16px;background:#000;color:#c8f0f0;line-height:15px">Spacing</div>
<div class="a hm" style="left:1088px;top:565px;line-height:19px">Pad
Circuit</div>
<div class="a" style="left:1161px;top:546px;width:16px;height:59px;background:#9cdad8;border:1px solid;border-color:#c8fff8 #3c7874 #3c7874 #c8fff8"></div>
<svg class="a" style="left:1162px;top:547px" width="14" height="57"><polygon points="7,1 12,12 2,12" fill="none" stroke="#3c7874" stroke-width="1.2"/><polygon points="7,56 12,45 2,45" fill="none" stroke="#3c7874" stroke-width="1.2"/><rect x="2" y="14" width="10" height="29" fill="none" stroke="#3c7874"/></svg>
<div class="a" style="left:1177px;top:546px;width:2px;height:59px;background:#000"></div>
<div class="a hm" style="left:1179px;top:546px;width:252px;text-align:center;font-size:14.5px">Resolution</div>
<div class="a hm" style="left:1183px;top:568px">0.1</div>
<div class="a" style="left:1179px;top:587px;width:250px;height:16px;background:#7cbcb8;border:1px solid;border-color:#3c7874 #c8fff8 #c8fff8 #3c7874"></div>
<div class="a" style="left:1181px;top:589px;width:31px;height:12px;background:#9cdad8;border:1px solid;border-color:#c8fff8 #3c7874 #3c7874 #c8fff8;box-shadow:inset -15px 0 0 -14px #3c7874"></div>
<!-- separator -->
<div class="a" style="left:975px;top:609px;width:462px;height:9px;background:#52ccae;border-top:2px solid #c8fff8;border-bottom:1px solid #3c7874"></div>
<div class="a" style="left:1418px;top:611px;width:8px;height:7px;background:#52ccae;border:1px solid;border-color:#c8fff8 #3c7874 #3c7874 #c8fff8"></div>
<!-- preview -->
<div class="a" style="left:978px;top:618px;width:459px;height:164px;background:#52ccae;border:2px solid #102020;box-shadow:0 0 0 1px #c8fff8"></div>
<svg class="a" style="left:1180px;top:636px" width="54" height="128"><path d="M3.5,6 L8,3.5 H20 V7 L23,10 H30 L33,7 V3.5 H44 L49.5,8 V118 L45,121.5 H33 V118 L30,115 H23 L20,118 V121.5 H9 L3.5,117 Z" fill="#9cdad8" stroke="#000" stroke-width="2.2"/>
<rect x="16" y="19" width="4" height="3" fill="#d020d0"/><rect x="19" y="32" width="4" height="3" fill="#d020d0"/><rect x="23" y="48" width="3" height="3" fill="#d020d0"/><path d="M21,46 v5 h2 M27,46 h1 v5 h-2" fill="none" stroke="#000" stroke-width="0.8"/></svg>
<!-- bottom row -->
<div class="ib" style="left:979px;top:785px;width:31px;height:38px;background:#9cdad8"></div>
<div class="ib" style="left:1013px;top:785px;width:31px;height:38px;background:#9cdad8"></div>
<svg class="a" style="left:979px;top:785px" width="70" height="38">
<g font-family="Liberation Serif,serif" font-size="10" fill="#000">
<rect x="4.5" y="7.5" width="21" height="21" fill="none" stroke="#000"/><line x1="4" y1="16.5" x2="26" y2="16.5" stroke="#000"/><text x="5" y="15" textLength="20">DEL</text><circle cx="15" cy="22" r="3" fill="#e01010"/>
<rect x="38.5" y="7.5" width="21" height="21" fill="none" stroke="#000"/><line x1="38" y1="16.5" x2="60" y2="16.5" stroke="#000"/><text x="39" y="15" textLength="20">REF</text><circle cx="49" cy="22" r="3" fill="#10c010"/>
</g></svg>
<div class="a hm" style="left:1045px;top:783px;width:308px;height:42px;background:#9cdad8;border:1px solid #000;font-size:15px;line-height:41px;padding-left:3px">2133 measurements for 4 layers</div>
<div class="ib" style="left:1354px;top:785px;width:38px;height:38px;background:#9cdad8"></div>
<div class="ib" style="left:1396px;top:785px;width:38px;height:38px;background:#9cdad8"></div>
<svg class="a" style="left:1354px;top:785px" width="82" height="38">
<rect x="5.5" y="5.5" width="27" height="27" fill="none" stroke="#000"/>
<rect x="8" y="8" width="13" height="13" fill="#e02020" stroke="#1020d0" stroke-width="2"/><path d="M10,19 v-5 h2 v3 h2 v-4 h2 v6z" fill="#ffc0c0" opacity="0.6"/><rect x="22" y="22" width="8" height="8" fill="none" stroke="#1020d0" stroke-width="2"/><path d="M22,11 h5 v8" fill="none" stroke="#000"/><polygon points="25,17 29,17 27,20" fill="#000"/>
<rect x="47.5" y="5.5" width="27" height="27" fill="none" stroke="#000"/>
<rect x="50" y="8" width="13" height="13" fill="#e02020" stroke="#1020d0" stroke-width="2"/><rect x="64" y="22" width="8" height="8" fill="none" stroke="#1020d0" stroke-width="2"/><path d="M63,27 h-8 v-4" fill="none" stroke="#000"/><polygon points="53,24 57,24 55,21" fill="#000"/>
</svg>
<div class="a" style="left:975px;top:827px;width:462px;height:2px;background:#000"></div>
<div class="a" style="left:975px;top:829px;width:462px;height:29px;background:#9cdad8"></div>
<div class="bt hm" style="left:975px;top:830px;width:463px;height:25px;font-size:15px;line-height:21px">Close</div>
<!-- ARROW -->
<svg class="a" style="left:0;top:0;pointer-events:none" width="1440" height="869"><polyline points="541,186.3 780,286.5 1040,398 1078,413" fill="none" stroke="#f87cf8" stroke-width="4"/><polygon points="1079,407 1088,412 1101,422.5 1099,425 1095,425.5 1074,421.5 1073.5,412.5" fill="#f87cf8" stroke="#f87cf8" stroke-width="0.8" stroke-linejoin="round"/></svg>
</body></html>
